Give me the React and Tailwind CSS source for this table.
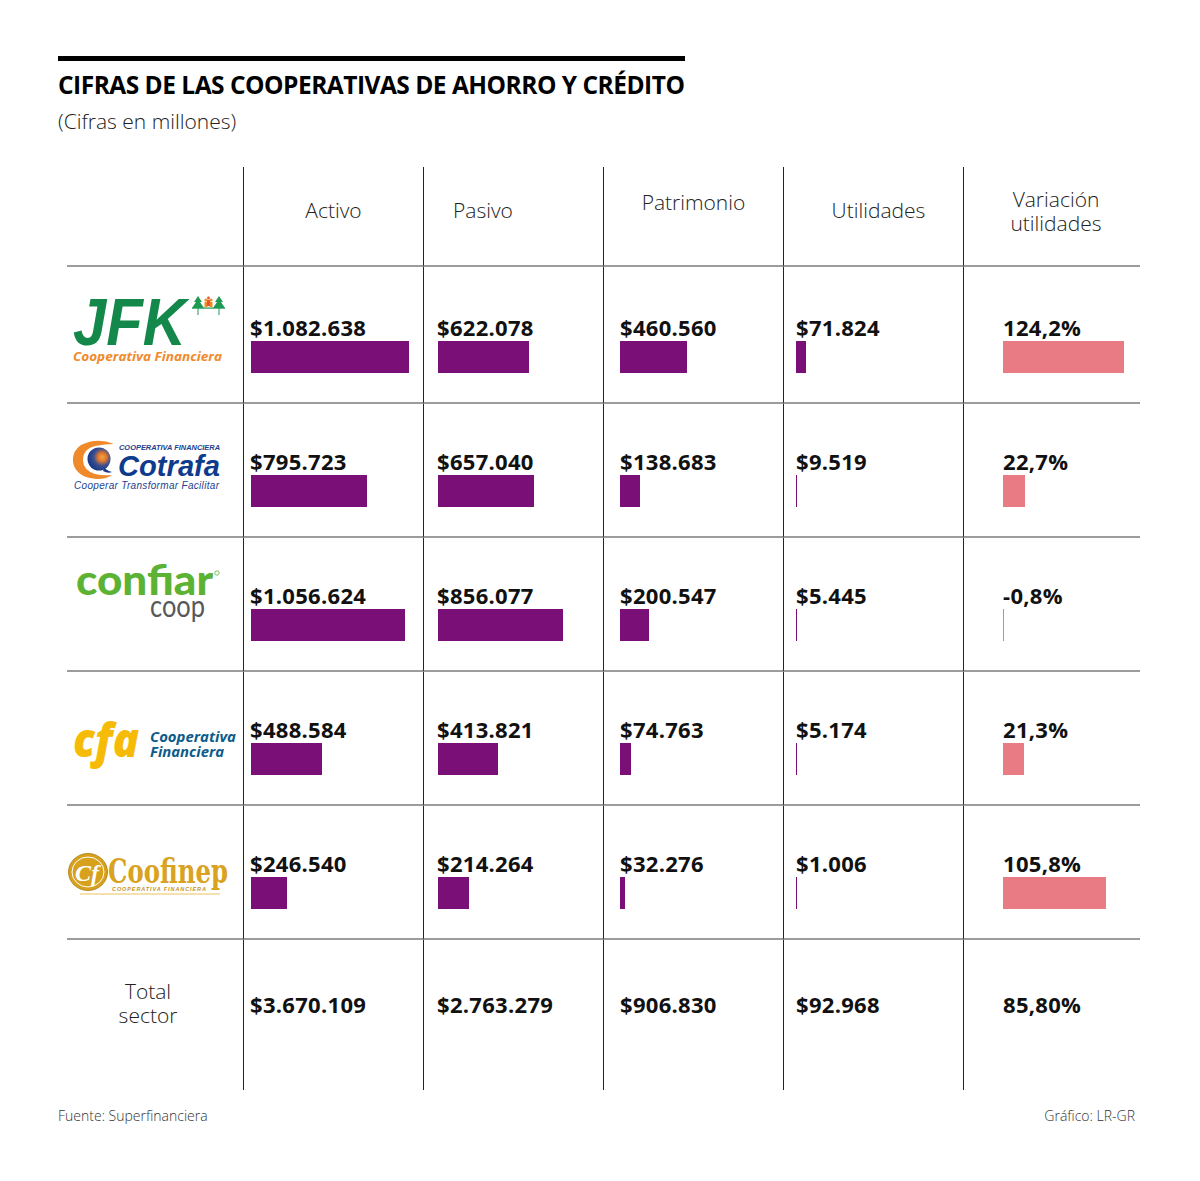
import React from "react";

const MONEY_SCALE = 158 / 1082638;
const PCT_SCALE = 121 / 124.2;

function JfkLogo() {
  return (
    <svg width="176" height="136" viewBox="0 0 176 136">
      <text x="6" y="78" fontFamily="'Liberation Sans', sans-serif" fontWeight="700" fontStyle="italic" fontSize="66" fill="#14884a" textLength="113" lengthAdjust="spacingAndGlyphs">JFK</text>
      {/* arbolitos */}
      <polygon points="131,29 127,35 135,35" fill="#1f9a52" />
      <polygon points="131,32 125,41 137,41" fill="#1f9a52" />
      <line x1="131" y1="41" x2="131" y2="48" stroke="#1f9a52" strokeWidth="1" />
      <polygon points="152,29 148,35 156,35" fill="#1f9a52" />
      <polygon points="152,32 146,41 158,41" fill="#1f9a52" />
      <line x1="152" y1="41" x2="152" y2="48" stroke="#1f9a52" strokeWidth="1" />
      <circle cx="139" cy="33" r="1.6" fill="#f08a24" />
      <circle cx="144" cy="33" r="1.6" fill="#f08a24" />
      <circle cx="141.5" cy="31" r="1.4" fill="#e4572e" />
      <rect x="137.5" y="35" width="3" height="5" fill="#f08a24" />
      <rect x="142.5" y="35" width="3" height="5" fill="#f08a24" />
      <rect x="140" y="33" width="3" height="6" fill="#e4572e" />
      <rect x="125" y="40.5" width="33" height="1.2" fill="#1f9a52" />
      <text x="6" y="94" fontFamily="'Open Sans', sans-serif" fontWeight="700" fontStyle="italic" fontSize="12.5" fill="#f08a2a" textLength="149" lengthAdjust="spacingAndGlyphs">Cooperativa Financiera</text>
    </svg>
  );
}

function CotrafaLogo() {
  return (
    <svg width="176" height="133" viewBox="0 0 176 133">
      <defs>
        <radialGradient id="globo" cx="0.64" cy="0.42" r="0.6">
          <stop offset="0" stopColor="#f5a04a" />
          <stop offset="0.3" stopColor="#e07a2c" />
          <stop offset="0.62" stopColor="#3d4f8e" />
          <stop offset="1" stopColor="#1a3a88" />
        </radialGradient>
      </defs>
      <path d="M47 40 Q30 33 14 41 Q3 49 7 62 Q12 74 30 75 Q40 75 45 71 Q36 72 28 70 Q16 66 16 56 Q16 45 28 42 Q38 40 47 40 Z" fill="#f0892a" />
      <circle cx="32" cy="55" r="11.5" fill="url(#globo)" />
      <path d="M37 64 Q41 67 45 68 Q41 70 36 67 Z" fill="#1a3a88" />
      <text x="52" y="46" fontFamily="'Liberation Sans', sans-serif" fontWeight="700" fontStyle="italic" fontSize="7.5" fill="#1d3f8f" textLength="101" lengthAdjust="spacingAndGlyphs">COOPERATIVA FINANCIERA</text>
      <text x="51" y="72" fontFamily="'Liberation Sans', sans-serif" fontWeight="700" fontStyle="italic" fontSize="30" fill="#0e3b8c" textLength="102" lengthAdjust="spacingAndGlyphs">Cotrafa</text>
      <text x="7" y="85" fontFamily="'Liberation Sans', sans-serif" fontStyle="italic" fontSize="10" fill="#1d3f8f" textLength="145" lengthAdjust="spacing">Cooperar  Transformar  Facilitar</text>
    </svg>
  );
}

function ConfiarLogo() {
  return (
    <svg width="176" height="133" viewBox="0 0 176 133">
      <text x="9" y="57" fontFamily="Lato, sans-serif" fontWeight="900" fontSize="42" fill="#5cb233" textLength="137" lengthAdjust="spacingAndGlyphs">confiar</text>
      <circle cx="150" cy="35" r="2.2" fill="none" stroke="#5cb233" strokeWidth="0.8" />
      <text x="83" y="79" fontFamily="Lato, sans-serif" fontWeight="400" fontSize="31" fill="#58585a" textLength="55" lengthAdjust="spacingAndGlyphs">coop</text>
    </svg>
  );
}

function CfaLogo() {
  return (
    <svg width="176" height="133" viewBox="0 0 176 133">
      <text x="6" y="85" fontFamily="'Open Sans', sans-serif" fontWeight="800" fontStyle="italic" fontSize="47" fill="#f6bb06" textLength="66" lengthAdjust="spacingAndGlyphs">cfa</text>
      <text x="83" y="70" fontFamily="'Open Sans', sans-serif" fontWeight="700" fontStyle="italic" fontSize="14" fill="#0c5b8a" textLength="86" lengthAdjust="spacingAndGlyphs">Cooperativa</text>
      <text x="83" y="85" fontFamily="'Open Sans', sans-serif" fontWeight="700" fontStyle="italic" fontSize="14" fill="#0c5b8a" textLength="74" lengthAdjust="spacingAndGlyphs">Financiera</text>
    </svg>
  );
}

function CoofinepLogo() {
  return (
    <svg width="176" height="133" viewBox="0 0 176 133">
      <ellipse cx="21" cy="66" rx="19.5" ry="18.5" fill="#d7a11c" stroke="#a9780f" strokeWidth="0.8" />
      <ellipse cx="21" cy="66" rx="16" ry="15" fill="none" stroke="#fff" strokeWidth="1" />
      <text x="8" y="75" fontFamily="'Liberation Serif', serif" fontWeight="700" fontStyle="italic" fontSize="24" fill="#fff">Cf</text>
      <text x="41" y="77" fontFamily="'DejaVu Serif', serif" fontWeight="700" fontSize="34" fill="#d9a321" textLength="120" lengthAdjust="spacingAndGlyphs">Coofinep</text>
      <text x="45" y="85" fontFamily="'Liberation Sans', sans-serif" fontWeight="700" fontStyle="italic" fontSize="5.5" fill="#c69419" textLength="94" lengthAdjust="spacing">COOPERATIVA FINANCIERA</text>
      <line x1="13" y1="88" x2="153" y2="88" stroke="#e8c25a" strokeWidth="1" />
    </svg>
  );
}

const filas = [
  { Logo: JfkLogo, alto: "h-[137px]", valores: [1082638, 622078, 460560, 71824], textos: ["$1.082.638", "$622.078", "$460.560", "$71.824"], variacion: 124.2, varTexto: "124,2%" },
  { Logo: CotrafaLogo, alto: "h-[134px]", valores: [795723, 657040, 138683, 9519], textos: ["$795.723", "$657.040", "$138.683", "$9.519"], variacion: 22.7, varTexto: "22,7%" },
  { Logo: ConfiarLogo, alto: "h-[134px]", valores: [1056624, 856077, 200547, 5445], textos: ["$1.056.624", "$856.077", "$200.547", "$5.445"], variacion: -0.8, varTexto: "-0,8%" },
  { Logo: CfaLogo, alto: "h-[134px]", valores: [488584, 413821, 74763, 5174], textos: ["$488.584", "$413.821", "$74.763", "$5.174"], variacion: 21.3, varTexto: "21,3%" },
  { Logo: CoofinepLogo, alto: "h-[134px]", valores: [246540, 214264, 32276, 1006], textos: ["$246.540", "$214.264", "$32.276", "$1.006"], variacion: 105.8, varTexto: "105,8%" },
];

const columnas = [
  "w-[180px] pl-[6px]",
  "w-[180px] pl-[13px]",
  "w-[180px] pl-[16px]",
  "w-[180px] pl-[12px]",
  "w-[177px] pl-[39px]",
];

const barras = ["ml-[1px]", "ml-[1px]", "", "", ""];

function Celda({ texto, ancho, color, col }) {
  return (
    <div className={`${columnas[col]} border-l border-b-2 border-l-[#222] border-b-[#9c9c9c] flex flex-col justify-end pb-[29px]`}>
      <p className="text-[22px] leading-[22px] font-bold tracking-[0.3px] text-[#111]">{texto}</p>
      <div className={`mt-[3px] h-[32px] ${color} ${barras[col]}`} style={{ width: `${Math.max(ancho, 0.6)}px` }}></div>
    </div>
  );
}

export default function App() {
  return (
    <div className="w-[1200px] h-[1181px] bg-white pl-[58px] pt-[56px] font-['Open_Sans',sans-serif] text-[#1a1a1a]">
      <div className="w-[627px] h-[5px] bg-black"></div>
      <h1 className="mt-[9px] text-[24.5px] leading-[30px] font-bold tracking-[-0.5px] text-black whitespace-nowrap">
        CIFRAS DE LAS COOPERATIVAS DE AHORRO Y CRÉDITO
      </h1>
      <p className="mt-[8px] text-[21px] leading-[26px] font-light text-[#222]">(Cifras en millones)</p>

      {/* Tabla */}
      <div className="ml-[9px] mt-[33px] w-[1073px]">
        {/* Encabezado */}
        <div className="flex h-[100px] text-[21px] leading-[24px] font-light text-[#222]">
          <div className="w-[176px] border-b-2 border-b-[#9c9c9c]"></div>
          <div className="w-[180px] border-l border-b-2 border-l-[#222] border-b-[#9c9c9c] pt-[31px] text-center">Activo</div>
          <div className="w-[180px] border-l border-b-2 border-l-[#222] border-b-[#9c9c9c] pt-[31px] pl-[29px]">Pasivo</div>
          <div className="w-[180px] border-l border-b-2 border-l-[#222] border-b-[#9c9c9c] pt-[23px] text-center">Patrimonio</div>
          <div className="w-[180px] border-l border-b-2 border-l-[#222] border-b-[#9c9c9c] pt-[31px] pl-[10px] text-center">Utilidades</div>
          <div className="w-[177px] border-l border-b-2 border-l-[#222] border-b-[#9c9c9c] pt-[20px] pl-[8px] text-center">
            Variación<br />utilidades
          </div>
        </div>

        {filas.map((fila, i) => (
          <div key={i} className={`flex ${fila.alto}`}>
            <div className="w-[176px] border-b-2 border-b-[#9c9c9c]">
              <fila.Logo />
            </div>
            {fila.valores.map((v, j) => (
              <Celda key={j} col={j} texto={fila.textos[j]} ancho={v * MONEY_SCALE} color="bg-[#7b0f78]" />
            ))}
            <Celda col={4} texto={fila.varTexto} ancho={Math.abs(fila.variacion) * PCT_SCALE} color="bg-[#e97b84]" />
          </div>
        ))}

        {/* Total sector */}
        <div className="flex h-[150px]">
          <div className="w-[176px] pt-[39px] pr-[14px] text-center text-[21px] leading-[24px] font-light text-[#222]">
            Total<br />sector
          </div>
          {["$3.670.109", "$2.763.279", "$906.830", "$92.968", "85,80%"].map((t, j) => (
            <div key={j} className={`${columnas[j]} border-l border-l-[#222] pt-[53px]`}>
              <p className="text-[22px] leading-[22px] font-bold tracking-[0.3px] text-[#111]">{t}</p>
            </div>
          ))}
        </div>
      </div>

      <div className="mt-[17px] w-[1077px] flex justify-between text-[14px] leading-[18px] font-light text-[#333]">
        <span>Fuente: Superfinanciera</span>
        <span>Gráfico: LR-GR</span>
      </div>
    </div>
  );
}
